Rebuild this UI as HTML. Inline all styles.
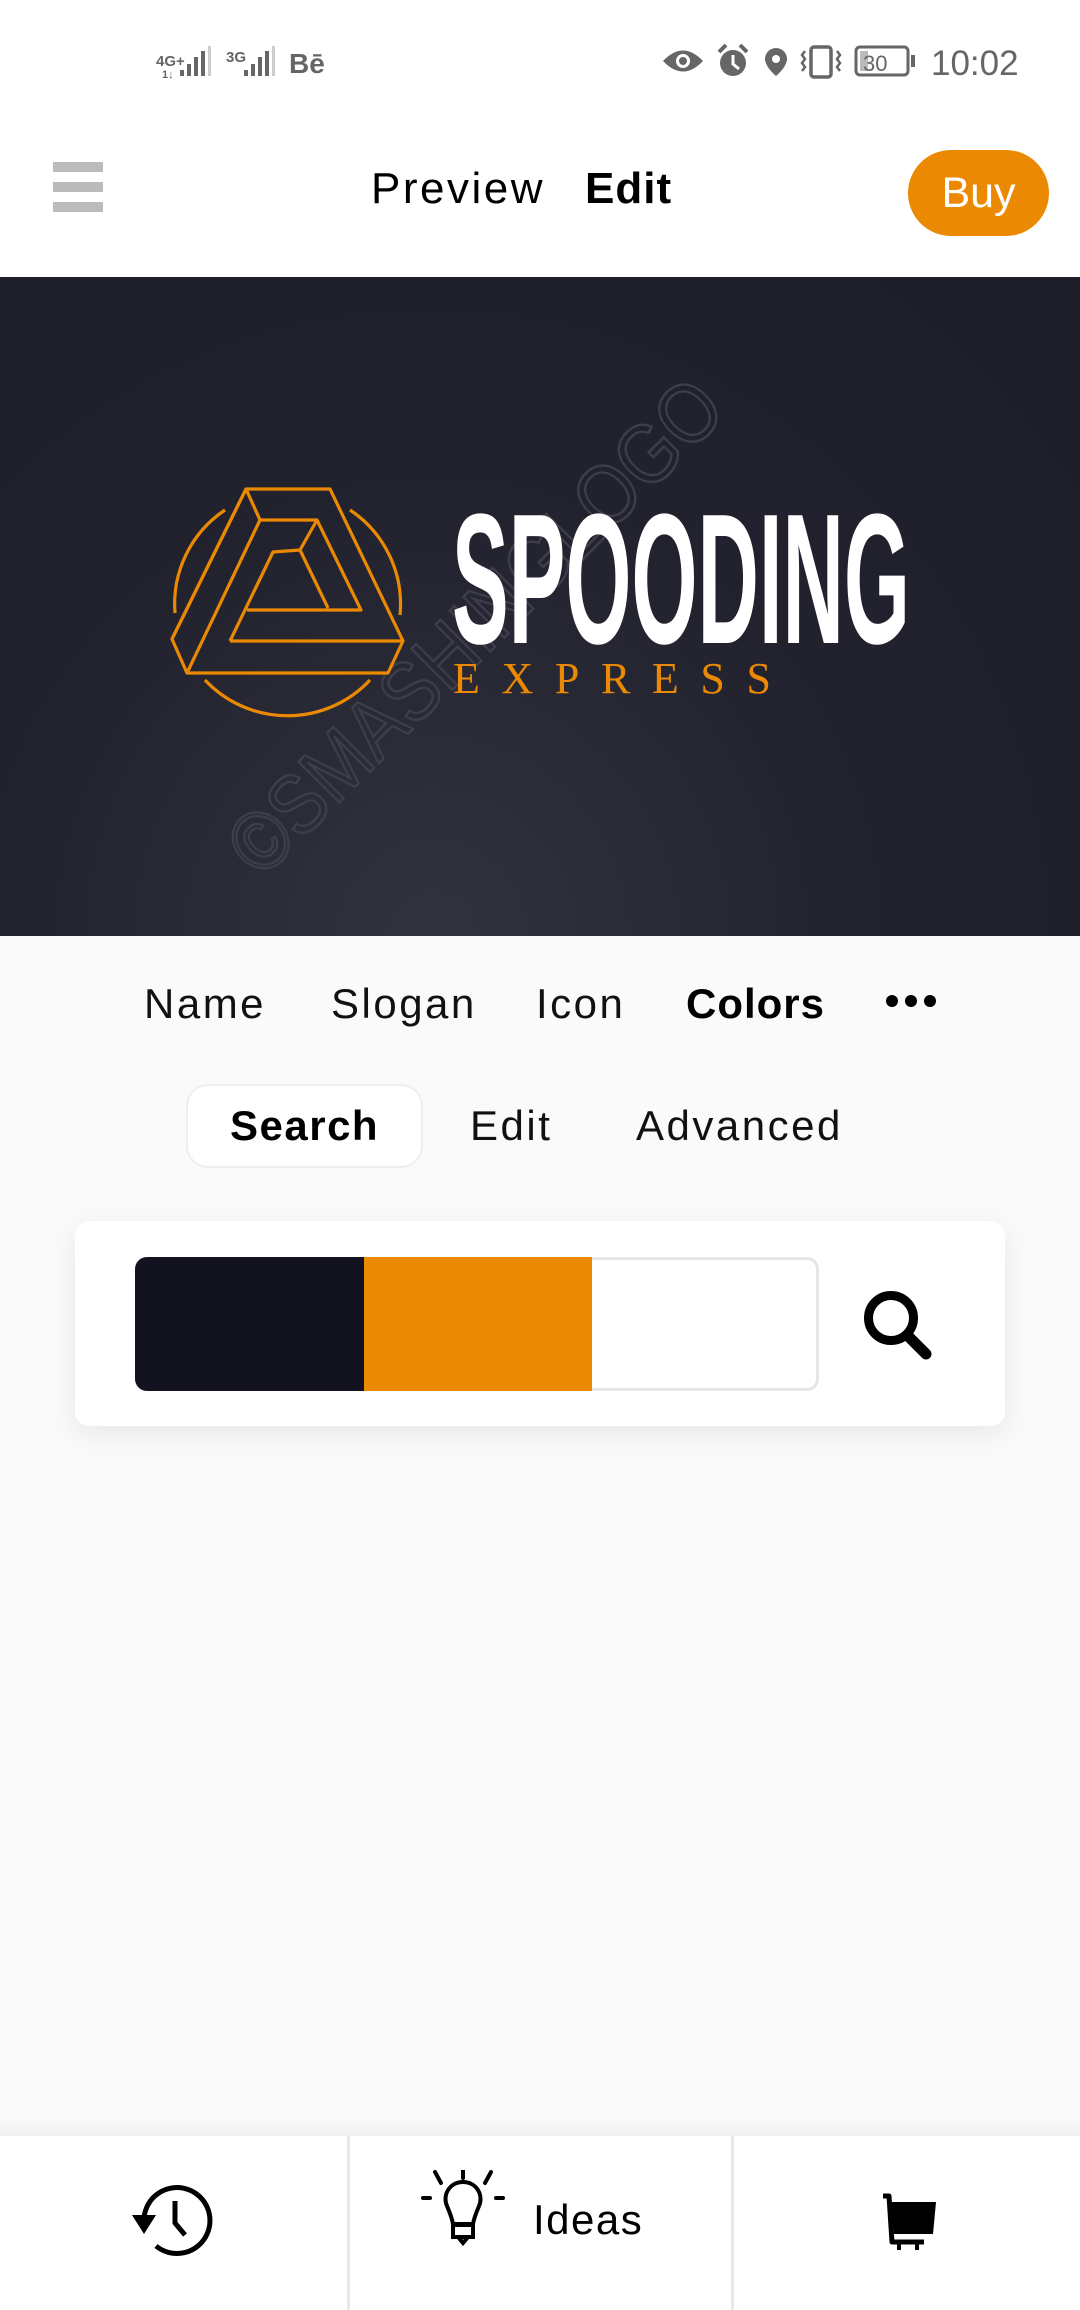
<!DOCTYPE html>
<html><head><meta charset="utf-8"><style>
*{margin:0;padding:0;box-sizing:border-box}
body{width:1080px;height:2310px;background:#fafafa;font-family:"Liberation Sans",sans-serif;position:relative;overflow:hidden}
.a{position:absolute;white-space:nowrap}
.t{font-size:42px;letter-spacing:2.5px;color:#111}
</style></head><body>
<div class="a" style="left:0;top:0;width:1080px;height:277px;background:#fff"></div>
<!-- status bar -->
<svg class="a" style="left:0;top:0" width="1080" height="110">
<g fill="#666">
<text x="156" y="66" font-size="15" font-weight="bold" font-family="Liberation Sans">4G+</text>
<text x="162" y="78" font-size="11" font-weight="bold" font-family="Liberation Sans">1↓</text>
<rect x="180" y="70" width="4" height="6"/><rect x="187" y="64" width="4" height="12"/><rect x="194" y="57" width="4" height="19"/><rect x="201" y="51" width="4" height="25"/>
<rect x="208" y="46" width="3" height="30" fill="#ccc"/>
<text x="226" y="62" font-size="15" font-weight="bold" font-family="Liberation Sans">3G</text>
<rect x="244" y="70" width="4" height="6"/><rect x="251" y="64" width="4" height="12"/><rect x="258" y="57" width="4" height="19"/><rect x="265" y="51" width="4" height="25"/>
<rect x="272" y="46" width="3" height="30" fill="#ccc"/>
<text x="289" y="73" font-size="28" font-weight="bold" font-family="Liberation Sans">Bē</text>
<path d="M663 61 Q683 40 703 61 Q683 82 663 61Z"/><circle cx="683" cy="61" r="7" fill="#fff"/><circle cx="683" cy="61" r="4"/>
<circle cx="733" cy="63" r="13"/><path d="M733 55 V64 L739 69" stroke="#fff" stroke-width="3" fill="none"/><path d="M719 52 L726 45 M747 52 L740 45" stroke="#666" stroke-width="4"/>
<path d="M776 48 a11 11 0 0 1 11 11 c0 8 -11 17 -11 17 c0 0 -11 -9 -11 -17 a11 11 0 0 1 11 -11Z"/><circle cx="776" cy="59" r="4" fill="#fff"/>
<rect x="811" y="47" width="20" height="30" rx="3" fill="none" stroke="#666" stroke-width="3.5"/>
<path d="M805 51 l-3 4 3 4 -3 4 3 4 -3 4 M837 51 l3 4 -3 4 3 4 -3 4 3 4" stroke="#666" stroke-width="2.5" fill="none"/>
<rect x="856" y="47" width="52" height="28" rx="4" fill="none" stroke="#666" stroke-width="3"/>
<rect x="860" y="51" width="8" height="20" fill="#bbb"/><rect x="911" y="55" width="4" height="12"/>
<text x="863" y="71" font-size="22" font-family="Liberation Sans">30</text>
<text x="931" y="75" font-size="35" font-family="Liberation Sans">10:02</text>
</g></svg>
<!-- header -->
<div class="a" style="left:53px;top:162px;width:50px;height:10px;background:#bbb"></div>
<div class="a" style="left:53px;top:182px;width:50px;height:10px;background:#bbb"></div>
<div class="a" style="left:53px;top:202px;width:50px;height:10px;background:#bbb"></div>
<div class="a" style="left:371px;top:164px;font-size:44px;letter-spacing:2.5px;color:#000">Preview</div>
<div class="a" style="left:585px;top:164px;font-size:44px;letter-spacing:1px;font-weight:bold;color:#000">Edit</div>
<div class="a" style="left:908px;top:150px;width:141px;height:86px;border-radius:43px;background:#eb8a02;color:#fff;font-size:43px;text-align:center;line-height:86px">Buy</div>
<!-- banner -->
<div class="a" style="left:0;top:277px;width:1080px;height:659px;background:radial-gradient(ellipse at 40% 100%,#33333f 0%,#23232f 45%,#1d1d2a 100%)"></div>
<svg class="a" style="left:0;top:277px" width="1080" height="659">
<g transform="translate(0,-277)">
<text x="0" y="0" transform="translate(262,880) rotate(-45)" font-size="84" font-family="Liberation Sans" fill="none" stroke="#3e3e4a" stroke-width="2.5" textLength="660" lengthAdjust="spacingAndGlyphs">©SMASHINGLOGO</text>
<g fill="none" stroke="#eb8a02" stroke-width="3.2" stroke-linejoin="round">
<path d="M246 489 L330 489 L403 641 L388 673 L187 673 L172 639 Z"/>
<path d="M246 489 L260 520 L317 520 L361 610 L247 610"/>
<path d="M260 520 L187 673"/>
<path d="M172 639 L246 489"/>
<path d="M230 641 L403 641"/>
<path d="M230 641 L273 552 L300 550 L317 520"/>
<path d="M300 550 L328 608"/>
<path d="M225 510 A113 113 0 0 0 175 613"/>
<path d="M350 510 A113 113 0 0 1 400 615"/>
<path d="M205 680 A113 113 0 0 0 370 680"/>
</g>
<g transform="translate(0,643) scale(1,1.45)">
<text x="452" y="0" font-size="128" font-weight="bold" font-family="Liberation Sans" fill="#fff" textLength="458" lengthAdjust="spacingAndGlyphs">SPOODING</text>
</g>
<text x="453" y="693" font-size="44" font-family="Liberation Serif" fill="#eb8a02" textLength="318" lengthAdjust="spacing">EXPRESS</text>
</g></svg>
<!-- tabs -->
<div class="a t" style="left:144px;top:980px">Name</div>
<div class="a t" style="left:331px;top:980px">Slogan</div>
<div class="a t" style="left:536px;top:980px">Icon</div>
<div class="a t" style="left:686px;top:980px;font-weight:bold;color:#000;letter-spacing:1px">Colors</div>
<div class="a" style="left:886px;top:995px;width:12px;height:12px;border-radius:6px;background:#000"></div>
<div class="a" style="left:905px;top:995px;width:12px;height:12px;border-radius:6px;background:#000"></div>
<div class="a" style="left:924px;top:995px;width:12px;height:12px;border-radius:6px;background:#000"></div>
<div class="a" style="left:186px;top:1084px;width:237px;height:84px;border-radius:22px;background:#fff;border:2px solid #eee"></div>
<div class="a t" style="left:230px;top:1102px;font-weight:bold;color:#000;letter-spacing:1.5px">Search</div>
<div class="a t" style="left:470px;top:1102px">Edit</div>
<div class="a t" style="left:636px;top:1102px">Advanced</div>
<!-- card -->
<div class="a" style="left:75px;top:1221px;width:930px;height:205px;border-radius:14px;background:#fff;box-shadow:0 8px 30px rgba(0,0,0,0.08)"></div>
<div class="a" style="left:135px;top:1257px;width:229px;height:134px;background:#13131f;border-radius:12px 0 0 12px"></div>
<div class="a" style="left:364px;top:1257px;width:228px;height:134px;background:#eb8a02"></div>
<div class="a" style="left:592px;top:1257px;width:227px;height:134px;background:#fff;border:3px solid #e6e6e6;border-left:none;border-radius:0 12px 12px 0"></div>
<svg class="a" style="left:850px;top:1280px" width="100" height="90"><circle cx="41" cy="38" r="22.5" fill="none" stroke="#000" stroke-width="9"/><path d="M58 56 L76 74" stroke="#000" stroke-width="11" stroke-linecap="round"/></svg>
<!-- bottom nav -->
<div class="a" style="left:0;top:2116px;width:1080px;height:20px;background:linear-gradient(#fafafa,#f0f0f0)"></div>
<div class="a" style="left:0;top:2136px;width:1080px;height:174px;background:#fff"></div>
<div class="a" style="left:347px;top:2136px;width:3px;height:174px;background:#e8e8e8"></div>
<div class="a" style="left:731px;top:2136px;width:3px;height:174px;background:#e8e8e8"></div>
<svg class="a" style="left:120px;top:2170px" width="110" height="100">
<path d="M24 52 A33 33 0 1 1 36 76" fill="none" stroke="#000" stroke-width="5"/>
<path d="M12 45 L36 45 L24 64 Z" fill="#000"/>
<path d="M55 31 V53 L65 65" fill="none" stroke="#000" stroke-width="5"/>
</svg>
<svg class="a" style="left:420px;top:2170px" width="90" height="100">
<path d="M43 12 a17 17 0 0 0 -16 24 c3 7 5 12 6 18 h20 c1 -6 3 -11 6 -18 a17 17 0 0 0 -16 -24Z" fill="none" stroke="#000" stroke-width="4"/>
<path d="M33 55 h20 v12 h-20z M38 67 l5 6 5 -6" fill="none" stroke="#000" stroke-width="4"/>
<path d="M43 -2 V8 M15 2 L21 13 M71 2 L65 13 M3 28 H10 M76 28 H83" stroke="#000" stroke-width="4" stroke-linecap="round"/>
</svg>
<div class="a" style="left:533px;top:2196px;font-size:42px;letter-spacing:1.5px;color:#000">Ideas</div>
<svg class="a" style="left:880px;top:2190px" width="60" height="70">
<path d="M3 6 H9 L12 52 H44" fill="none" stroke="#000" stroke-width="5" stroke-linejoin="round"/>
<path d="M11 12 H56 L53 44 H14 Z" fill="#000"/>
<rect x="17" y="52" width="4" height="8"/><rect x="35" y="52" width="4" height="8"/>
</svg>
</body></html>
